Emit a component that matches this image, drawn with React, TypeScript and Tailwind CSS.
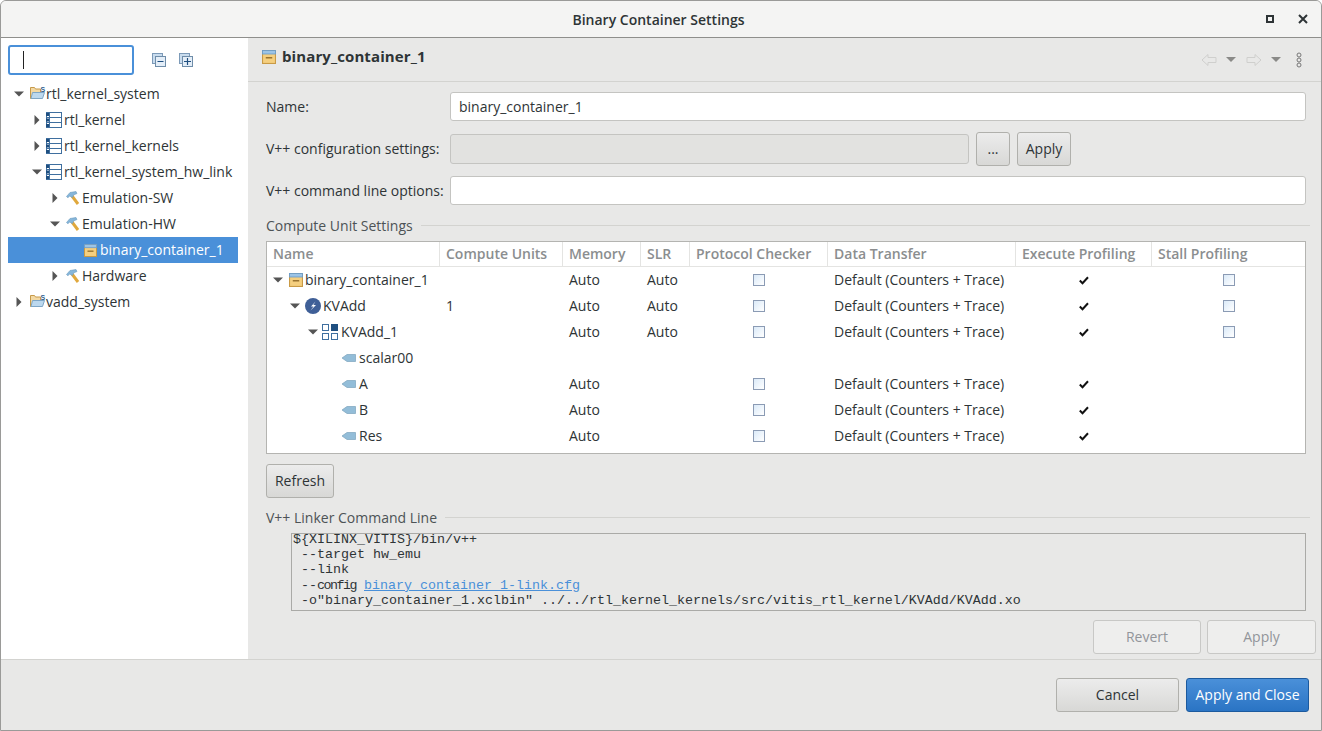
import React from "react";

const Tri = ({ open }: { open?: boolean }) => (
  <svg width="10" height="10" viewBox="0 0 10 10" className="shrink-0">
    {open ? <path d="M0 2.5H10L5 7.5Z" fill="#555" /> : <path d="M2.5 0L7.5 5L2.5 10Z" fill="#555" />}
  </svg>
);

const FolderS = () => (
  <span className="flex w-[18px] pl-[2px] shrink-0">
    <svg width="16" height="16" viewBox="0 0 16 16" className="shrink-0">
      <path d="M0.5 1.5h4l1 1.5h5v9.5h-10z" fill="#f3d9a4" stroke="#c79a4a" />
      <path d="M2.5 6.5h12l-2 6h-11.5z" fill="#bcd8ee" stroke="#7ea6c6" />
      <text x="10.5" y="5.5" fontSize="7" fontWeight="700" fill="#2f5f8f" fontFamily="Liberation Sans">S</text>
    </svg>
  </span>
);

const ProjIcon = () => (
  <span className="flex w-[18px] shrink-0">
    <svg width="16" height="16" viewBox="0 0 16 16" className="shrink-0">
      <rect x="0.5" y="0.5" width="15" height="15" fill="#fff" stroke="#3f6f9f" />
      <path d="M3.5 0.5V15.5M0.5 5.5H15.5M0.5 10.5H15.5" stroke="#3f6f9f" />
      <rect x="0" y="1" width="3" height="3" fill="#1f4f80" />
      <rect x="0" y="6.5" width="3" height="3" fill="#1f4f80" />
      <rect x="0" y="12" width="3" height="3" fill="#1f4f80" />
    </svg>
  </span>
);

const Hammer = () => (
  <span className="flex w-[18px] pl-[2px] shrink-0">
    <svg width="14" height="14" viewBox="0 0 14 14" className="shrink-0">
      <path d="M6 5L12 13" stroke="#e0a83c" strokeWidth="3" />
      <path d="M0.5 5.5L4 1.5L10 0.5L11 2.5L7.5 4L6.5 6.5L3.5 5L2 6.8Z" fill="#86b6da" stroke="#6c9cc0" strokeWidth="0.6" />
    </svg>
  </span>
);

const BoxIcon = ({ size = 13 }: { size?: number }) => (
  <svg width={size} height={size} viewBox="0 0 13 13" className="shrink-0">
    <rect x="0.5" y="0.5" width="12" height="12" fill="#f5cf7f" stroke="#c99a45" />
    <rect x="0.5" y="0.5" width="12" height="3.2" fill="#9cc4e6" stroke="#6a9ccc" strokeWidth="0.8" />
    <rect x="3.5" y="6.5" width="6" height="1.4" fill="#9a7430" />
  </svg>
);

const KernelIcon = () => (
  <svg width="16" height="16" viewBox="0 0 16 16" className="shrink-0">
    <circle cx="8" cy="8" r="8" fill="#3f5f97" />
    <path d="M10.5 3.5L6 8.5H8.5L5.5 12.5L11 7H8.3L10.5 3.5Z" fill="#fff" />
  </svg>
);

const InstanceIcon = () => (
  <svg width="16" height="16" viewBox="0 0 16 16" className="shrink-0">
    <rect x="0.5" y="0.5" width="6" height="6" fill="#fff" stroke="#3f6f9f" />
    <rect x="9" y="0" width="7" height="7" fill="#1f4f80" />
    <rect x="0.5" y="9.5" width="6" height="6" fill="#fff" stroke="#3f6f9f" />
    <rect x="9.5" y="9.5" width="6" height="6" fill="#fff" stroke="#3f6f9f" />
  </svg>
);

const PortIcon = () => (
  <svg width="14" height="8" viewBox="0 0 14 8" className="shrink-0">
    <path d="M0 4L5 0.5H13.5V7.5H5Z" fill="#93bdd8" stroke="#7ba3bd" strokeWidth="0.7" />
  </svg>
);

const Check = () => (
  <svg width="10" height="9" viewBox="0 0 10 9">
    <path d="M0.8 4.5L3.5 7.2L9 1.2" fill="none" stroke="#111" strokeWidth="2" />
  </svg>
);

const Box = () => <span className="block w-[12px] h-[12px] border border-[#8b9bb4] bg-gradient-to-br from-[#dbeaf8] to-[#ffffff]" />;

const TreeRow = ({ pad, tri, icon, label, selected }: { pad: number; tri?: "o" | "c"; icon: React.ReactNode; label: string; selected?: boolean }) => (
  <div
    className={`flex items-center h-[26px] whitespace-nowrap ${selected ? "bg-[#4a90d9] text-white" : "text-[#2e3436]"}`}
    style={{ paddingLeft: pad }}
  >
    <span className="w-[18px] flex justify-center shrink-0">{tri && <Tri open={tri === "o"} />}</span>
    {icon}
    <span className="pb-[2px]">{label}</span>
  </div>
);

const Btn = ({ children, className = "" }: { children: React.ReactNode; className?: string }) => (
  <button className={`h-[34px] pb-[2px] rounded-[3px] border border-[#b0b0ac] bg-gradient-to-b from-[#ececec] to-[#d8d8d6] text-[#2e3436] ${className}`}>
    {children}
  </button>
);

const Section = ({ title }: { title: string }) => (
  <div className="flex items-center gap-2 h-[20px]">
    <span className="text-[#4d5356] whitespace-nowrap">{title}</span>
    <span className="flex-1 h-px bg-[#d3d3d0]" />
  </div>
);

const grid = "grid grid-cols-[173px_123px_78px_49px_138px_188px_136px_1fr]";
const heads = ["Name", "Compute Units", "Memory", "SLR", "Protocol Checker", "Data Transfer", "Execute Profiling", "Stall Profiling"];

const DT = "Default (Counters + Trace)";
const rows: { pad: number; tri?: boolean; icon: React.ReactNode; iconGap: string; labelGap: string; name: string; cu?: string; mem?: string; slr?: string; pc?: boolean; dt?: boolean; ep?: boolean; sp?: boolean }[] = [
  { pad: 2, tri: true, icon: <BoxIcon size={14} />, iconGap: "ml-[2px]", labelGap: "ml-[2px]", name: "binary_container_1", mem: "Auto", slr: "Auto", pc: true, dt: true, ep: true, sp: true },
  { pad: 19, tri: true, icon: <KernelIcon />, iconGap: "ml-[1px]", labelGap: "ml-[2px]", name: "KVAdd", cu: "1", mem: "Auto", slr: "Auto", pc: true, dt: true, ep: true, sp: true },
  { pad: 37, tri: true, icon: <InstanceIcon />, iconGap: "", labelGap: "ml-[3px]", name: "KVAdd_1", mem: "Auto", slr: "Auto", pc: true, dt: true, ep: true, sp: true },
  { pad: 57, icon: <PortIcon />, iconGap: "", labelGap: "ml-[3px]", name: "scalar00" },
  { pad: 57, icon: <PortIcon />, iconGap: "", labelGap: "ml-[3px]", name: "A", mem: "Auto", pc: true, dt: true, ep: true },
  { pad: 57, icon: <PortIcon />, iconGap: "", labelGap: "ml-[3px]", name: "B", mem: "Auto", pc: true, dt: true, ep: true },
  { pad: 57, icon: <PortIcon />, iconGap: "", labelGap: "ml-[3px]", name: "Res", mem: "Auto", pc: true, dt: true, ep: true },
];

export default function App() {
  return (
    <div className="w-[1322px] h-[731px] overflow-hidden flex flex-col bg-[#e8e8e7] border border-[#9a9a98] rounded-t-[6px] text-[14px] text-[#2e3436] font-['Open_Sans','Noto_Sans',sans-serif]">
      {/* Title bar */}
      <div className="h-[37px] shrink-0 flex items-center justify-center relative bg-[#f4f4f3] border-b border-[#8f8f8c] pr-[5px]">
        <span className="font-semibold text-[#2e3436]">Binary Container Settings</span>
        <span className="absolute right-[47px] top-[14px] w-[8px] h-[8px] border-2 border-[#2e3436]" />
        <svg className="absolute right-[13px] top-[13px]" width="10" height="10" viewBox="0 0 10 10">
          <path d="M1 1L9 9M9 1L1 9" stroke="#2e3436" strokeWidth="2" />
        </svg>
      </div>

      <div className="flex-1 flex min-h-0">
        {/* Left tree */}
        <div className="w-[247px] shrink-0 bg-white pt-[7px] pl-[7px] pr-[10px]">
          <div className="flex items-center h-[30px]">
            <div className="w-[126px] h-[30px] rounded-[3px] border-2 border-[#4a90d9] bg-white flex items-center pl-[13px]">
              <span className="w-px h-[18px] bg-[#222]" />
            </div>
            <svg className="ml-[18px]" width="14" height="14" viewBox="0 0 14 14">
              <rect x="0.5" y="0.5" width="10" height="10" fill="#c9dcee" stroke="#7c9ab8" />
              <rect x="3.5" y="3.5" width="10" height="10" fill="#e4eef8" stroke="#6f8da9" />
              <path d="M5.5 8.5H11.5" stroke="#1f4f80" strokeWidth="1.2" />
            </svg>
            <svg className="ml-[13px]" width="14" height="14" viewBox="0 0 14 14">
              <rect x="0.5" y="0.5" width="10" height="10" fill="#c9dcee" stroke="#7c9ab8" />
              <rect x="3.5" y="3.5" width="10" height="10" fill="#e4eef8" stroke="#6f8da9" />
              <path d="M5 8.5H12M8.5 5V12" stroke="#1f4f80" strokeWidth="1.2" />
            </svg>
          </div>
          <div className="mt-[6px]">
            <TreeRow pad={2} tri="o" icon={<FolderS />} label="rtl_kernel_system" />
            <TreeRow pad={20} tri="c" icon={<ProjIcon />} label="rtl_kernel" />
            <TreeRow pad={20} tri="c" icon={<ProjIcon />} label="rtl_kernel_kernels" />
            <TreeRow pad={20} tri="o" icon={<ProjIcon />} label="rtl_kernel_system_hw_link" />
            <TreeRow pad={38} tri="c" icon={<Hammer />} label="Emulation-SW" />
            <TreeRow pad={38} tri="o" icon={<Hammer />} label="Emulation-HW" />
            <TreeRow pad={55} icon={<span className="flex w-[19px] pl-[3px] shrink-0"><BoxIcon /></span>} label="binary_container_1" selected />
            <TreeRow pad={38} tri="c" icon={<Hammer />} label="Hardware" />
            <TreeRow pad={2} tri="c" icon={<FolderS />} label="vadd_system" />
          </div>
        </div>

        {/* Right */}
        <div className="flex-1 min-w-0 flex flex-col">
          <div className="h-[44px] shrink-0 flex items-center pl-[14px] pr-[19px] border-b border-[#d3d3d0]">
            <div className="flex items-center pb-[6px]">
              <BoxIcon size={14} />
              <span className="ml-[6px] font-bold text-[15px] tracking-[0.1px]">binary_container_1</span>
            </div>
            <div className="ml-auto flex items-center">
              <svg width="16" height="14" viewBox="0 0 16 14"><path d="M1 7L7 1.5V4.5H15V9.5H7V12.5Z" fill="none" stroke="#cfcfcd" /></svg>
              <svg className="ml-[9px]" width="10" height="5" viewBox="0 0 10 5"><path d="M0 0H10L5 5Z" fill="#8a8a88" /></svg>
              <svg className="ml-[10px]" width="16" height="14" viewBox="0 0 16 14"><path d="M15 7L9 1.5V4.5H1V9.5H9V12.5Z" fill="none" stroke="#cfcfcd" /></svg>
              <svg className="ml-[9px]" width="10" height="5" viewBox="0 0 10 5"><path d="M0 0H10L5 5Z" fill="#8a8a88" /></svg>
              <svg className="ml-[15px]" width="6" height="16" viewBox="0 0 6 16">
                <circle cx="3" cy="3" r="2" fill="none" stroke="#777" />
                <circle cx="3" cy="8" r="2" fill="none" stroke="#777" />
                <circle cx="3" cy="13" r="2" fill="none" stroke="#777" />
              </svg>
            </div>
          </div>

          <div className="flex-1 flex flex-col pl-[18px] pr-[15px] pt-[10px] min-h-0">
            <div className="flex items-center h-[29px]">
              <span className="w-[184px]">Name:</span>
              <div className="flex-1 h-[29px] bg-white border border-[#c4c4c1] rounded-[3px] flex items-center pl-[8px]">binary_container_1</div>
            </div>
            <div className="flex items-center h-[34px] mt-[11px]">
              <span className="w-[184px] whitespace-nowrap pb-[2px]">V++ configuration settings:</span>
              <div className="w-[519px] h-[30px] bg-[#e2e2e0] border border-[#c4c4c1] rounded-[3px]" />
              <Btn className="w-[34px] ml-[7px]">...</Btn>
              <Btn className="w-[54px] ml-[7px]">Apply</Btn>
            </div>
            <div className="flex items-center h-[29px] mt-[10px]">
              <span className="w-[184px] whitespace-nowrap">V++ command line options:</span>
              <div className="flex-1 h-[29px] bg-white border border-[#c4c4c1] rounded-[3px]" />
            </div>

            <div className="mt-[10px] -mr-[4px]"><Section title="Compute Unit Settings" /></div>

            {/* Table */}
            <div className="mt-[6px] h-[213px] shrink-0 bg-white border border-[#b4b4b1] overflow-hidden">
              <div className={`${grid} h-[25px] border-b border-[#e4e4e2] text-[#8b8e8f] font-semibold`}>
                {heads.map((h, i) => (
                  <div key={h} className={`flex items-center pl-[6px] pb-[2px] whitespace-nowrap ${i < 7 ? "border-r border-[#e4e4e2]" : ""}`}>{h}</div>
                ))}
              </div>
              {rows.map((r) => (
                <div key={r.name} className={`${grid} h-[26px] items-center`}>
                  <div className="flex items-center whitespace-nowrap" style={{ paddingLeft: r.pad }}>
                    <span className="w-[18px] flex justify-center shrink-0">{r.tri && <Tri open />}</span>
                    <span className={`flex ${r.iconGap}`}>{r.icon}</span>
                    <span className={`${r.labelGap} pb-[2px]`}>{r.name}</span>
                  </div>
                  <div className="pl-[6px] pb-[2px]">{r.cu}</div>
                  <div className="pl-[6px] pb-[2px]">{r.mem}</div>
                  <div className="pl-[6px] pb-[2px]">{r.slr}</div>
                  <div className="flex justify-center">{r.pc && <Box />}</div>
                  <div className="pl-[6px] pb-[2px] whitespace-nowrap">{r.dt && DT}</div>
                  <div className="flex justify-center">{r.ep && <Check />}</div>
                  <div className="flex justify-center">{r.sp && <Box />}</div>
                </div>
              ))}
            </div>

            <Btn className="w-[68px] mt-[10px] shrink-0">Refresh</Btn>

            <div className="mt-[9px] -mr-[4px]"><Section title="V++ Linker Command Line" /></div>

            <div className="ml-[25px] mt-[6px] h-[78px] shrink-0 border border-[#aaaaa7] pl-[1px] font-['Liberation_Mono',monospace] text-[13.33px] leading-[15.2px] whitespace-pre overflow-hidden text-[#2e3436]">
              <div className="-mt-[2px]">{"${XILINX_VITIS}/bin/v++"}</div>
              <div>{" --target hw_emu"}</div>
              <div>{" --link"}</div>
              <div>{" --"}<span className="tracking-[-1.5px]">config</span>{" "}<span className="text-[#4a90d9] underline">binary_container_1-link.cfg</span></div>
              <div>{' -o"binary_container_1.xclbin" ../../rtl_kernel_kernels/src/vitis_rtl_kernel/KVAdd/KVAdd.xo'}</div>
            </div>

            <div className="mt-[9px] flex justify-end gap-[6px] -mr-[10px]">
              <button className="w-[108px] h-[34px] pb-[2px] rounded-[3px] border border-[#c8c8c6] bg-[#eeeeed] text-[#92959a]">Revert</button>
              <button className="w-[109px] h-[34px] pb-[2px] rounded-[3px] border border-[#c8c8c6] bg-[#eeeeed] text-[#92959a]">Apply</button>
            </div>
          </div>
        </div>
      </div>

      {/* Footer */}
      <div className="h-[71px] shrink-0 border-t border-[#d3d3d0] flex items-start justify-end gap-[7px] pt-[18px] pr-[12px]">
        <Btn className="w-[123px]">Cancel</Btn>
        <button className="w-[123px] h-[34px] pb-[2px] rounded-[3px] border border-[#1c5a9e] bg-gradient-to-b from-[#4a90d9] to-[#2a74c4] text-white">Apply and Close</button>
      </div>
    </div>
  );
}
